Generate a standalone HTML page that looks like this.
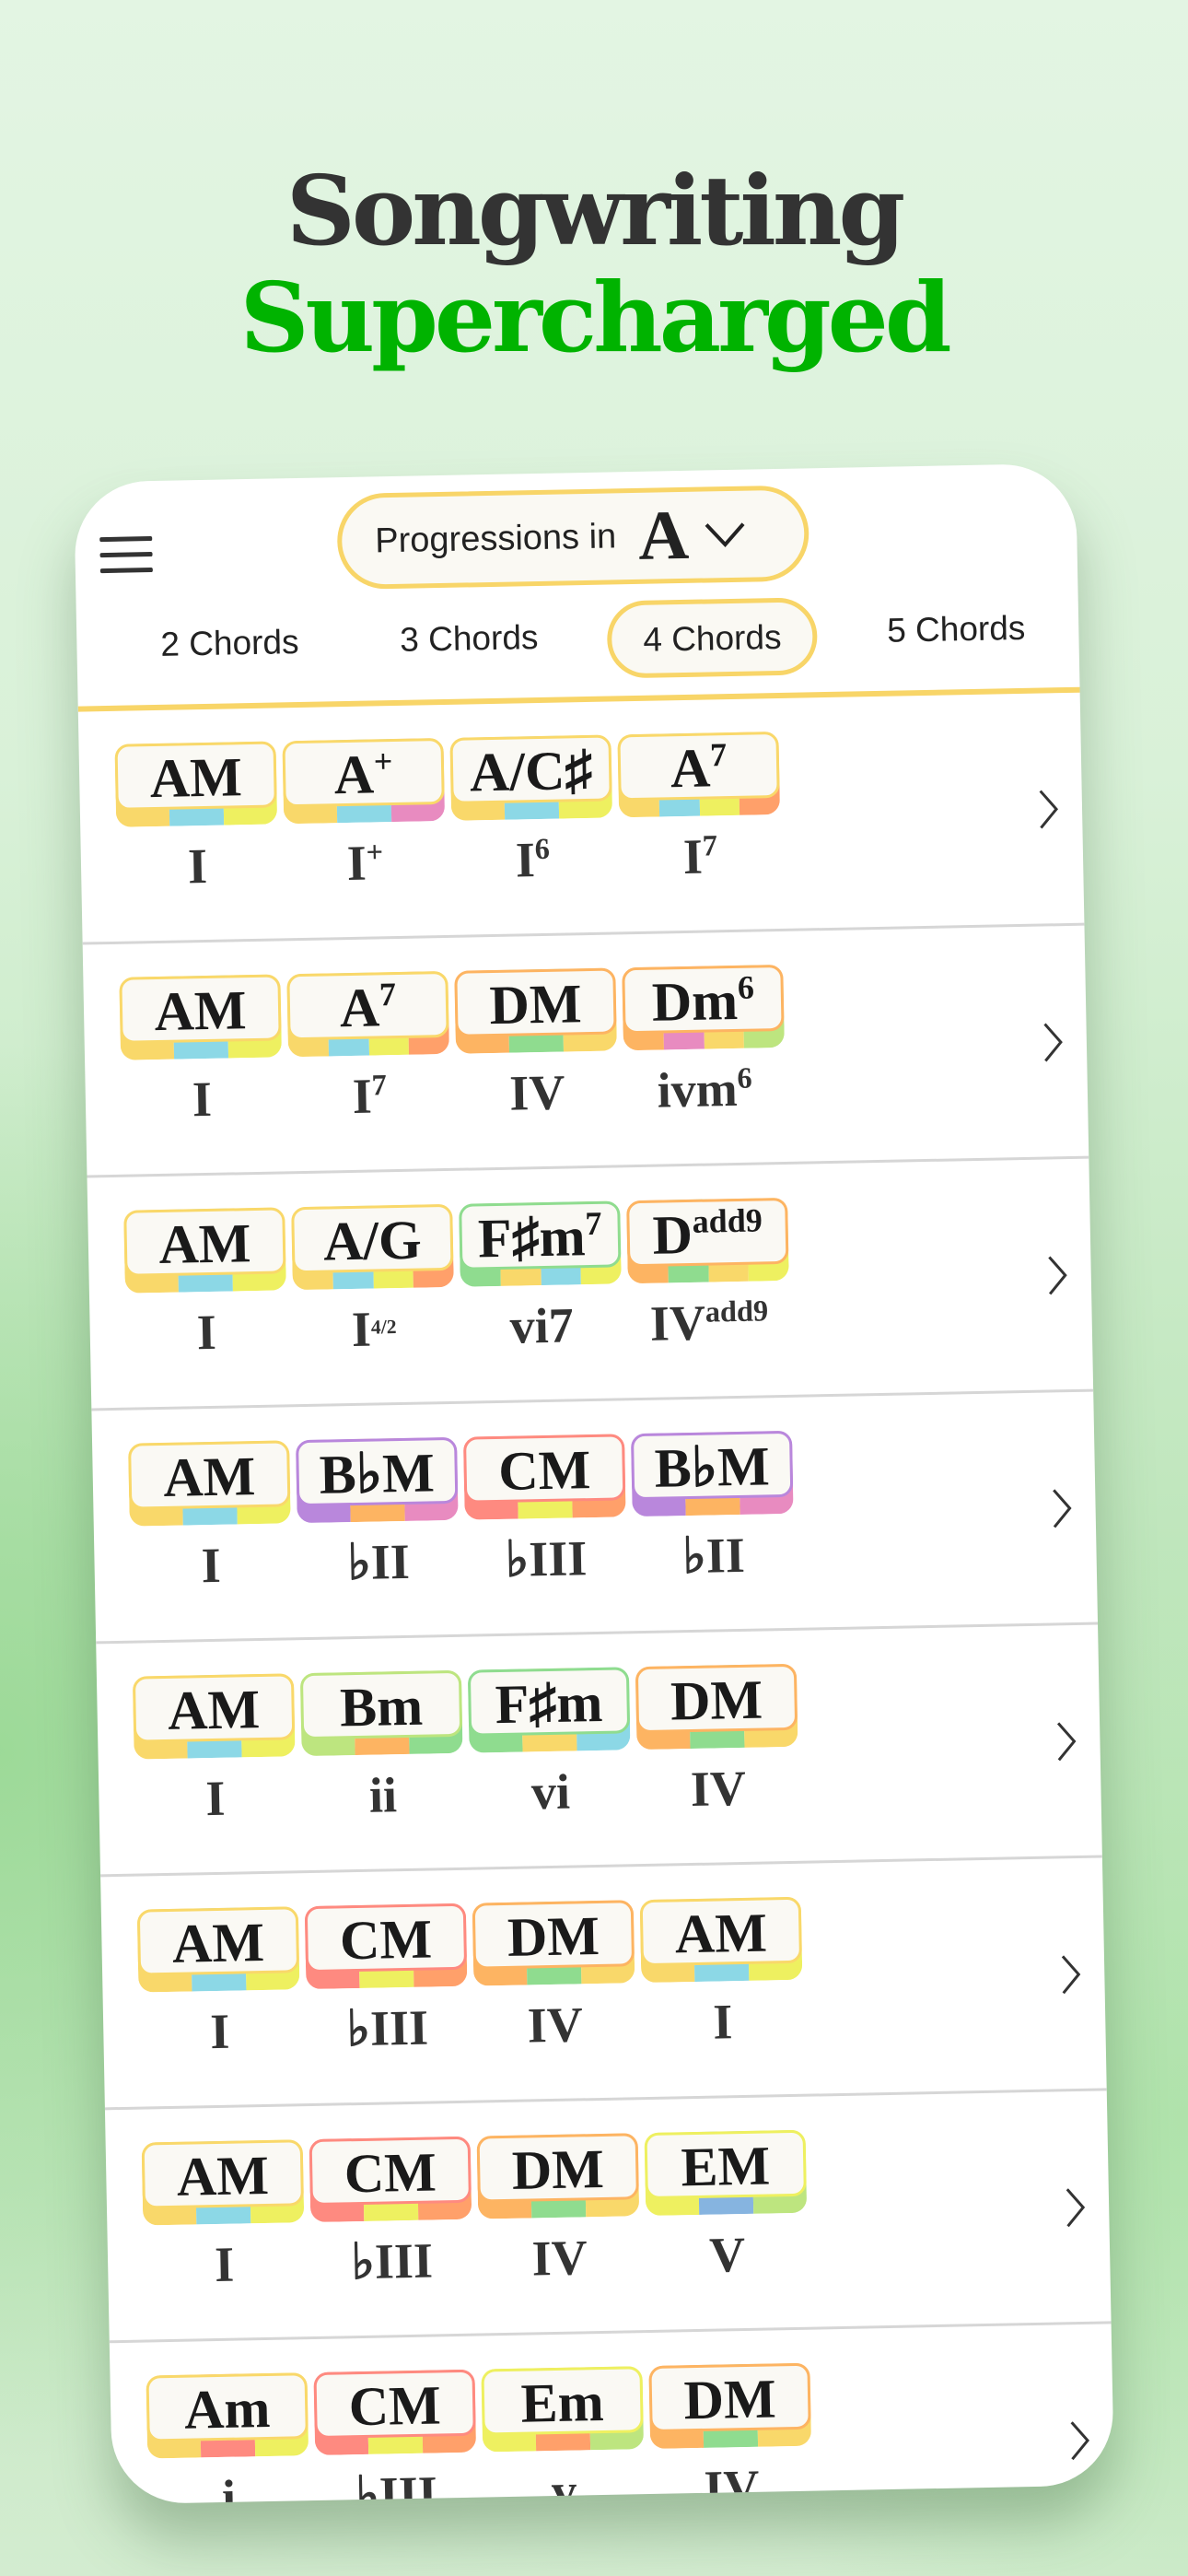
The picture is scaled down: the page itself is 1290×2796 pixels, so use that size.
<!DOCTYPE html>
<html><head><meta charset="utf-8">
<style>
*{margin:0;padding:0;box-sizing:border-box}
html,body{width:1290px;height:2796px;overflow:hidden}
body{position:relative;background:
radial-gradient(ellipse 900px 1100px at 0px 1900px, rgba(150,215,145,0.85), rgba(150,215,145,0) 70%),
radial-gradient(ellipse 900px 900px at 1290px 2300px, rgba(170,225,165,0.8), rgba(170,225,165,0) 70%),
linear-gradient(180deg,#e3f5e3 0%,#d9f1d8 30%,#bfe6bc 60%,#c6e8c3 85%,#d3ecd0 100%);
font-family:"Liberation Sans",sans-serif}
.title{position:absolute;left:0;width:1290px;text-align:center;font-family:"DejaVu Serif","Liberation Serif",serif;font-weight:bold;letter-spacing:-4px}
.t1{top:164px;font-size:104px;color:#333;line-height:130px}
.t2{top:280px;font-size:104px;color:#00b300;line-height:130px}
.card{position:absolute;left:101px;top:513px;width:1088px;height:2195px;background:#fff;border-radius:80px;transform:rotate(-1.1deg);overflow:hidden;box-shadow:0 40px 60px rgba(60,100,60,0.35)}
.ham{position:absolute;left:27px;top:60px;width:57px}
.ham i{display:block;height:5px;background:#333;border-radius:2px;margin-bottom:12px}
.pill{position:absolute;left:285px;top:18px;width:512px;height:104px;border:5px solid #f8d568;border-radius:52px;background:#faf9f3;display:flex;align-items:center;padding-left:36px}
.pill .p{font-size:38px;color:#222}
.pill .a{font-family:"Liberation Serif",serif;font-weight:bold;font-size:76px;color:#222;margin-left:24px;line-height:1}
.tabs{position:absolute;top:140px;left:0;width:1088px;height:90px}
.tab{position:absolute;top:0;height:84px;line-height:76px;font-size:37px;color:#222;text-align:center;transform:translateX(-50%);padding:0 34px;white-space:nowrap}
.tab.sel{border:5px solid #f8d568;border-radius:42px;background:#faf9f3}
.hline{position:absolute;top:243px;left:0;width:1088px;height:6px;background:#f8d568}
.row{position:absolute;left:0;width:1088px;height:253px;border-bottom:3px solid #d6d6d6}
.chips{position:absolute;left:39px;top:36px;display:flex;gap:7px}
.chip{position:relative;width:175px;height:90px}
.base{position:absolute;inset:0;border-radius:16px;overflow:hidden;display:flex}
.base span{flex:1}
.face{position:absolute;left:0;top:0;right:0;height:72px;background:#faf9f4;border:3px solid;border-radius:15px;text-align:center;font-family:"Liberation Serif",serif;font-weight:bold;font-size:60px;line-height:70px;color:#1a1a1a;white-space:nowrap}
.face sup,.num sup{font-size:0.6em;vertical-align:0;position:relative;top:-0.6em}
.nums{position:absolute;left:39px;top:140px;display:flex;gap:7px}
.num{width:175px;text-align:center;font-family:"Liberation Serif",serif;font-weight:bold;font-size:54px;color:#333;line-height:60px;white-space:nowrap}
.chev{position:absolute;left:1040px;top:104px}
</style></head><body>
<div class="title t1">Songwriting</div>
<div class="title t2">Supercharged</div>
<div class="card">
<div class="ham"><i></i><i></i><i></i></div>
<div class="pill"><span class="p">Progressions in</span><span class="a">A</span>
<svg width="46" height="30" viewBox="0 0 46 30" style="margin-left:16px"><path d="M3 4 L23 26 L43 4" fill="none" stroke="#222" stroke-width="4"/></svg></div>
<div class="tabs">
<div class="tab" style="left:166px">2 Chords</div>
<div class="tab" style="left:426px">3 Chords</div>
<div class="tab sel" style="left:690px">4 Chords</div>
<div class="tab" style="left:955px">5 Chords</div>
</div>
<div class="hline"></div>
<div id="rows"></div>
</div>
<script>
var C={A:"#f9d86a",B:"#bde57f",C:"#fe8a80",Cs:"#8cd8e6",D:"#fdb462",E:"#eef060",F:"#e88bc0",Fs:"#8fdc8f",G:"#ffa06a",Gs:"#86b4e0",Bb:"#b987dc"};
function ch(t,n){return {t:t,n:n};}
var rows=[
[[ch("AM",["A","Cs","E"]),"I"],[ch("A<sup>+</sup>",["A","Cs","F"]),"I<sup>+</sup>"],[ch("A/C♯",["A","Cs","E"]),"I<sup>6</sup>"],[ch("A<sup>7</sup>",["A","Cs","E","G"]),"I<sup>7</sup>"]],
[[ch("AM",["A","Cs","E"]),"I"],[ch("A<sup>7</sup>",["A","Cs","E","G"]),"I<sup>7</sup>"],[ch("DM",["D","Fs","A"]),"IV"],[ch("Dm<sup>6</sup>",["D","F","A","B"]),"ivm<sup>6</sup>"]],
[[ch("AM",["A","Cs","E"]),"I"],[ch("A/G",["A","Cs","E","G"]),"I<sup style='font-size:0.4em'>4/2</sup>"],[ch("F♯m<sup>7</sup>",["Fs","A","Cs","E"]),"vi7"],[ch("D<sup>add9</sup>",["D","Fs","A","E"]),"IV<sup>add9</sup>"]],
[[ch("AM",["A","Cs","E"]),"I"],[ch("B♭M",["Bb","D","F"]),"♭II"],[ch("CM",["C","E","G"]),"♭III"],[ch("B♭M",["Bb","D","F"]),"♭II"]],
[[ch("AM",["A","Cs","E"]),"I"],[ch("Bm",["B","D","Fs"]),"ii"],[ch("F♯m",["Fs","A","Cs"]),"vi"],[ch("DM",["D","Fs","A"]),"IV"]],
[[ch("AM",["A","Cs","E"]),"I"],[ch("CM",["C","E","G"]),"♭III"],[ch("DM",["D","Fs","A"]),"IV"],[ch("AM",["A","Cs","E"]),"I"]],
[[ch("AM",["A","Cs","E"]),"I"],[ch("CM",["C","E","G"]),"♭III"],[ch("DM",["D","Fs","A"]),"IV"],[ch("EM",["E","Gs","B"]),"V"]],
[[ch("Am",["A","C","E"]),"i"],[ch("CM",["C","E","G"]),"♭III"],[ch("Em",["E","G","B"]),"v"],[ch("DM",["D","Fs","A"]),"IV"]]
];
var h="";
rows.forEach(function(r,i){
 h+='<div class="row" style="top:'+(249+i*253)+'px"><div class="chips">';
 r.forEach(function(c){var k=c[0];h+='<div class="chip"><div class="base">'+k.n.map(function(x){return '<span style="background:'+C[x]+'"></span>'}).join('')+'</div><div class="face" style="border-color:'+C[k.n[0]]+'">'+k.t+'</div></div>';});
 h+='</div><div class="nums">';
 r.forEach(function(c){h+='<div class="num">'+c[1]+'</div>';});
 h+='</div><svg class="chev" width="24" height="44" viewBox="0 0 24 44"><path d="M3 2 L20 22 L3 42" fill="none" stroke="#333" stroke-width="3"/></svg></div>';
});
document.getElementById("rows").innerHTML=h;
</script>
</body></html>
